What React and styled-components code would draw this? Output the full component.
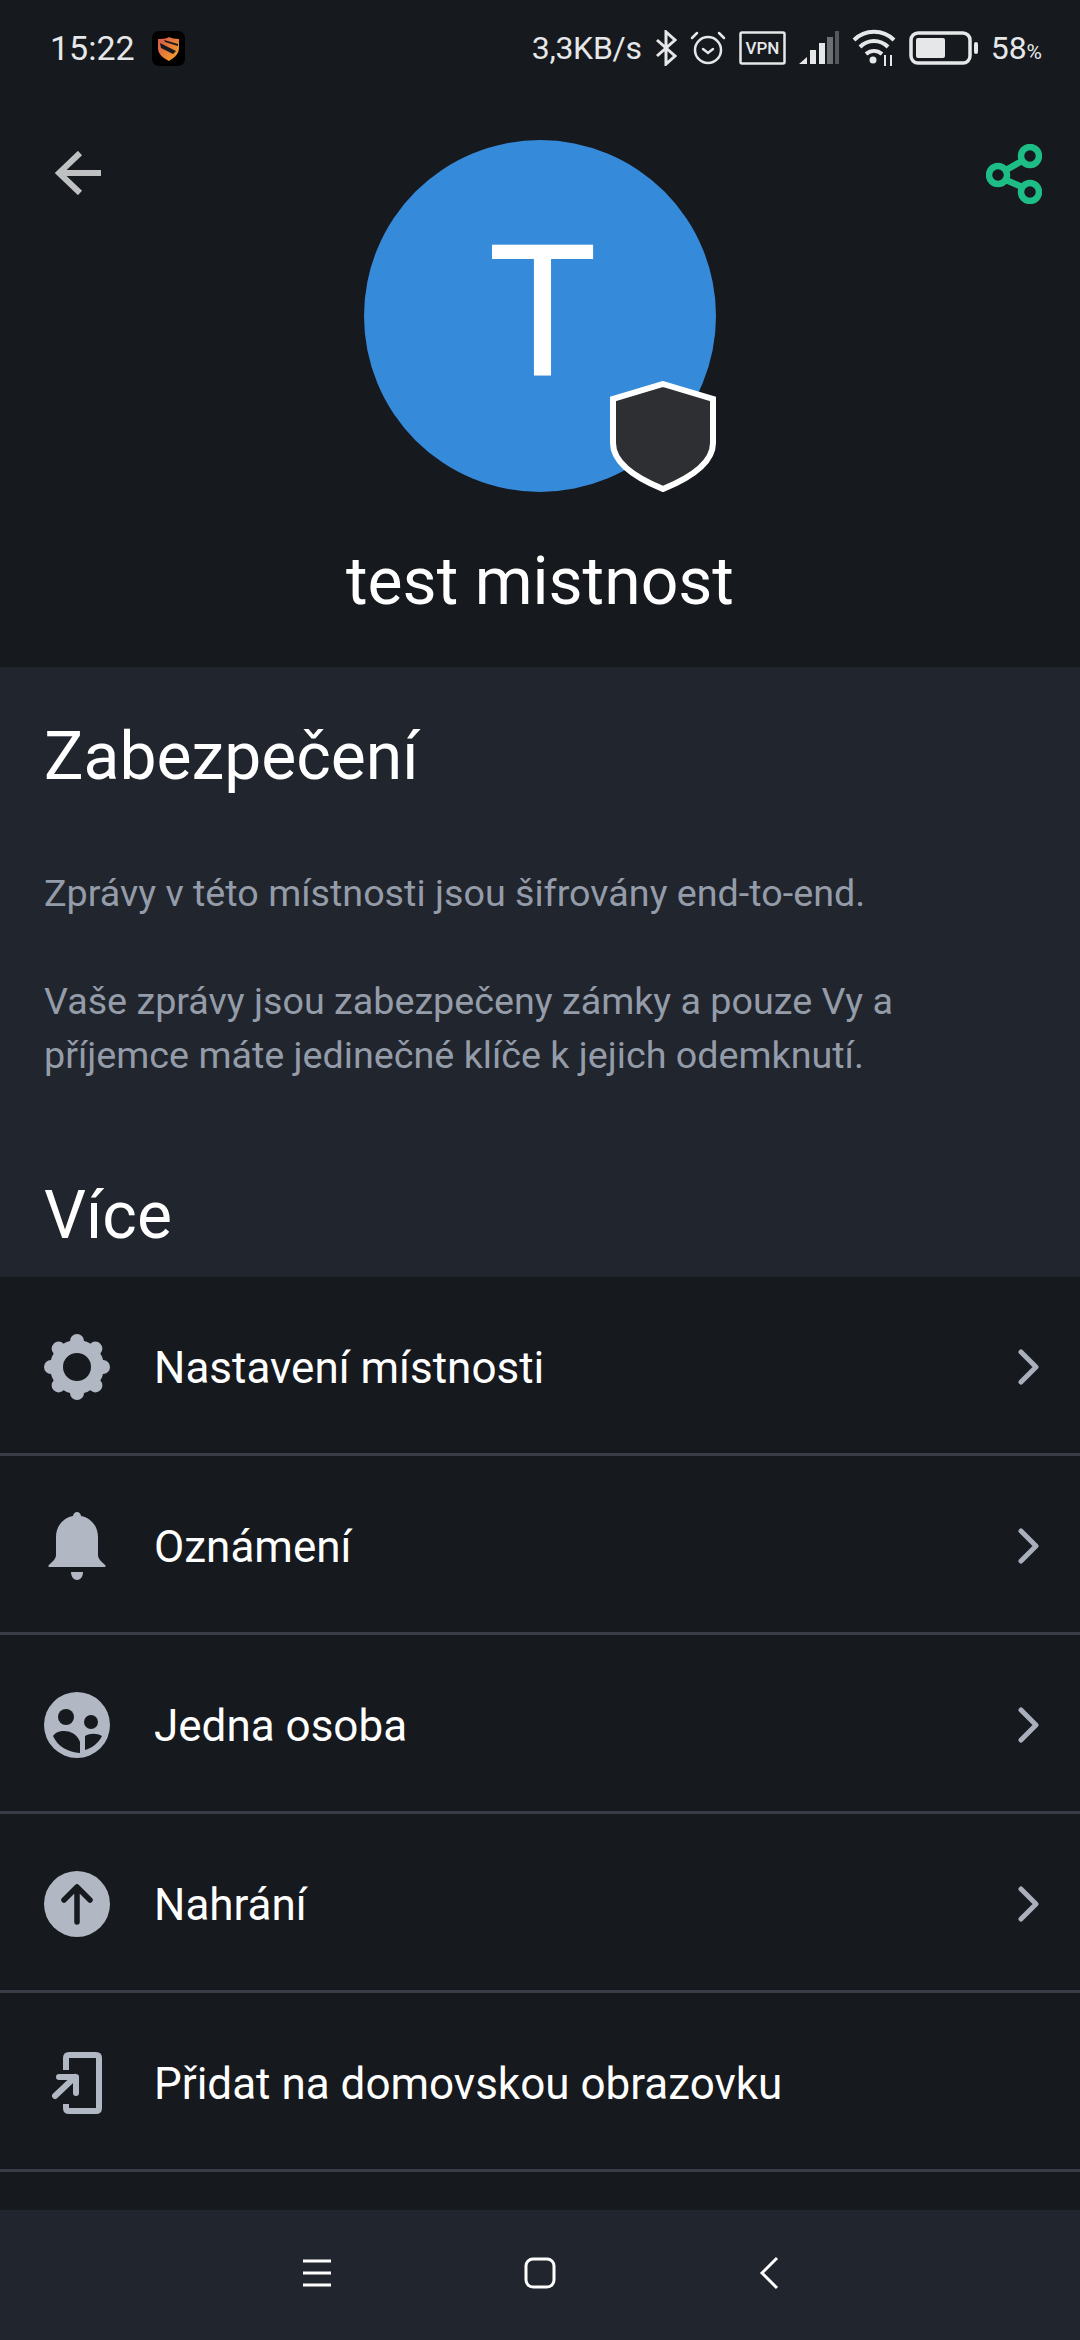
import React from 'react';
import styled, { createGlobalStyle } from 'styled-components';

const GlobalStyle = createGlobalStyle`
  html, body {
    margin: 0;
    padding: 0;
    background: #16191e;
    font-family: Roboto, "Noto Sans", sans-serif;
  }
`;

const Page = styled.div`
  width: 1080px;
  height: 2340px;
  display: flex;
  flex-direction: column;
  overflow: hidden;
  background: #16191e;
`;

const StatusBar = styled.div`
  height: 96px;
  flex: none;
  display: flex;
  align-items: center;
  justify-content: space-between;
  padding: 0 38px 0 50px;
  box-sizing: border-box;
  color: #e6e7e9;
  font-size: 32px;
`;

const StatusGroup = styled.div`
  display: flex;
  align-items: center;
  gap: ${props => props.gap || 0}px;
`;

const Clock = styled.span`
  font-size: 34px;
`;

const Speed = styled.span`
  letter-spacing: -0.3px;
`;

const Percent = styled.span`
  font-size: 21px;
`;

const Hero = styled.div`
  height: 571px;
  flex: none;
  display: grid;
  grid-template-columns: 1fr auto 1fr;
  grid-template-rows: 352px auto;
  padding-top: 44px;
  box-sizing: border-box;
`;

const IconButton = styled.div`
  display: flex;
  justify-content: ${props => props.end ? 'flex-end' : 'flex-start'};
  padding: ${props => props.top}px ${props => props.end ? 38 : 0}px 0 ${props => props.end ? 0 : 55}px;
`;

const Avatar = styled.div`
  position: relative;
  width: 352px;
  height: 352px;
  box-sizing: border-box;
  padding-left: 5px;
  border-radius: 50%;
  background: #368ada;
  color: #fff;
  font-size: 184px;
  line-height: 346px;
  text-align: center;
`;

const Badge = styled.svg`
  position: absolute;
  right: 0;
  bottom: 0;
`;

const RoomName = styled.div`
  grid-column: 1 / -1;
  text-align: center;
  color: #fff;
  font-size: 66px;
  line-height: 72px;
  margin-top: 54px;
`;

const Details = styled.div`
  height: 610px;
  flex: none;
  background: #21252d;
  padding: 0 44px;
  box-sizing: border-box;
`;

const Heading = styled.h2`
  margin: ${props => props.top}px 0 0;
  color: #fff;
  font-size: 66px;
  font-weight: 400;
  line-height: 72px;
`;

const Body = styled.p`
  margin: ${props => props.top}px 0 0;
  color: #949ca9;
  font-size: 37.7px;
  line-height: 54px;
`;

const Menu = styled.div`
  flex: 1;
  min-height: 0;
  background: #16191e;
`;

const Row = styled.div`
  height: 179px;
  box-sizing: border-box;
  border-bottom: 3px solid #393d46;
  display: flex;
  align-items: center;
  padding: 4px 39px 0 44px;
`;

const RowIcon = styled.div`
  width: 66px;
  height: 70px;
  flex: none;
  display: flex;
  align-items: center;
  justify-content: center;
  margin-right: 44px;
`;

const RowLabel = styled.div`
  flex: 1;
  color: #fff;
  font-size: 44px;
  padding-top: 2px;
`;

const NavBar = styled.div`
  height: 130px;
  flex: none;
  background: #21252d;
  display: grid;
  grid-template-columns: repeat(3, 32px);
  justify-content: center;
  column-gap: 191px;
  align-items: center;
  padding-bottom: 4px;
  box-sizing: border-box;
`;

const Bluetooth = () => (
  <svg width="22" height="36" viewBox="0 0 22 36" fill="none" stroke="#e6e7e9" strokeWidth="3">
    <path d="M2 10 L20 26 L11 34 V2 L20 10 L2 26" />
  </svg>
);

const Alarm = () => (
  <svg width="36" height="36" viewBox="0 0 36 36" fill="none" stroke="#e6e7e9" strokeWidth="2.5" strokeLinecap="round">
    <circle cx="18" cy="20" r="13" />
    <path d="M13 19 L18 23 L23 19" />
    <path d="M2 8 L7 3 M34 8 L29 3" />
  </svg>
);

const Vpn = () => (
  <svg width="47" height="34" viewBox="0 0 47 34">
    <rect x="1.5" y="1.5" width="44" height="31" rx="1.5" fill="none" stroke="#e6e7e9" strokeWidth="2.5" />
    <text x="23.5" y="23" textAnchor="middle" fontFamily="Roboto, sans-serif" fontSize="17" fontWeight="500" fill="#e6e7e9">VPN</text>
  </svg>
);

const Signal = () => (
  <svg width="40" height="34" viewBox="0 0 40 34">
    <path d="M0 33 L8 26 V33 Z" fill="#e6e7e9" />
    <rect x="11" y="19" width="6" height="14" fill="#e6e7e9" />
    <rect x="20" y="12" width="6" height="21" fill="#e6e7e9" />
    <rect x="28" y="6" width="6" height="27" fill="#6d7075" />
    <rect x="36" y="0" width="4" height="33" fill="#55585d" />
  </svg>
);

const Wifi = () => (
  <svg width="44" height="38" viewBox="0 0 44 38" fill="none" stroke="#e6e7e9" strokeWidth="4">
    <path d="M2 11 C13 0 31 0 42 11" />
    <path d="M8 18 C16 10 28 10 36 18" />
    <path d="M14 25 C19 21 25 21 30 25" />
    <circle cx="21" cy="31" r="3.5" fill="#e6e7e9" stroke="none" />
    <path d="M33 26 V37 M39 26 V37" strokeWidth="2" />
  </svg>
);

const Battery = () => (
  <svg width="69" height="34" viewBox="0 0 69 34">
    <rect x="2" y="2" width="59" height="30" rx="7" fill="none" stroke="#e6e7e9" strokeWidth="3.5" />
    <rect x="7" y="7" width="29" height="20" rx="2" fill="#e6e7e9" />
    <rect x="65" y="11" width="4" height="12" rx="2" fill="#e6e7e9" />
  </svg>
);

const AppShield = () => (
  <svg width="33" height="35" viewBox="0 0 33 35">
    <defs>
      <linearGradient id="shieldFill" x1="0" y1="0" x2="1" y2="1">
        <stop offset="0" stopColor="#d9534f" />
        <stop offset="1" stopColor="#f7a823" />
      </linearGradient>
    </defs>
    <rect width="33" height="35" rx="7" fill="#000" />
    <path d="M6 8 C12 8 16 7 17 6 C19 7 23 8 27 8 V17 C27 23 22 27 17 30 C11 27 6 23 6 17 Z" fill="url(#shieldFill)" />
    <path d="M8 12 L24 20 L21 23 L9 17 Z M12 9 L26 13 L26 15 L13 11 Z" fill="#16191e" />
  </svg>
);

const BackArrow = () => (
  <svg width="46" height="44" viewBox="0 0 46 44" fill="none" stroke="#bfc0c2" strokeWidth="6">
    <path d="M46 22 H4" />
    <path d="M25 2 L4 22 L25 42" />
  </svg>
);

const ShareIcon = () => (
  <svg width="56" height="60" viewBox="0 0 56 60" fill="none" stroke="#1fbd86" strokeWidth="6.5">
    <circle cx="44" cy="12" r="9" />
    <circle cx="12" cy="31" r="9" />
    <circle cx="44" cy="48" r="9" />
    <path d="M20 26 L36 17 M20 36 L36 43" />
  </svg>
);

const ShieldBadge = () => (
  <Badge width="106" height="111" viewBox="0 0 106 111">
    <path
      d="M53 3 L103 18 V62 C103 82 80 97 53 108 C26 97 3 82 3 62 V18 Z"
      fill="#2e2f33"
      stroke="#fff"
      strokeWidth="6"
    />
  </Badge>
);

const GearIcon = () => (
  <svg width="66" height="66" viewBox="0 0 66 66">
    <circle cx="33" cy="33" r="20.5" fill="none" stroke="#b1b8c3" strokeWidth="13" />
    {[0, 45, 90, 135, 180, 225, 270, 315].map(deg => (
      <rect key={deg} x="26" y="0" width="14" height="16" rx="7" fill="#b1b8c3" transform={`rotate(${deg} 33 33)`} />
    ))}
  </svg>
);

const BellIcon = () => (
  <svg width="58" height="68" viewBox="0 0 58 68" fill="#b1b8c3">
    <path d="M29 0 C31 0 33 2 33 4 C43 6 50 14 50 25 V43 C50 47 54 50 57 53 C58 54 58 55 56 55 H2 C0 55 0 54 1 53 C4 50 8 47 8 43 V25 C8 14 15 6 25 4 C25 2 27 0 29 0 Z" />
    <path d="M23 60 H35 C35 65 32 68 29 68 C26 68 23 65 23 60 Z" />
  </svg>
);

const PeopleIcon = () => (
  <svg width="66" height="66" viewBox="0 0 66 66">
    <circle cx="33" cy="33" r="33" fill="#b1b8c3" />
    <g fill="#16191e">
      <circle cx="22" cy="25" r="8" />
      <circle cx="47" cy="30" r="7" />
      <path d="M9 44 C13 37 31 36 36 50 V61 C24 60 14 55 9 44 Z" />
      <path d="M41 44 C46 41 53 41 58 44 C55 50 49 56 41 58 Z" />
    </g>
  </svg>
);

const UploadIcon = () => (
  <svg width="66" height="66" viewBox="0 0 66 66">
    <circle cx="33" cy="33" r="33" fill="#b1b8c3" />
    <path d="M33 51 V18 M20 29 L33 16 L46 29" fill="none" stroke="#16191e" strokeWidth="5.5" strokeLinecap="round" strokeLinejoin="round" />
  </svg>
);

const AddHomeIcon = () => (
  <svg width="50" height="62" viewBox="0 0 50 62" fill="none" stroke="#b1b8c3" strokeWidth="6">
    <path d="M14 18 V6 C14 4 15 3 17 3 H44 C46 3 47 4 47 6 V56 C47 58 46 59 44 59 H17 C15 59 14 58 14 56 V52" />
    <path d="M3 44 L23 25 M7 25 H24 V41" strokeLinecap="round" strokeLinejoin="round" />
  </svg>
);

const Chevron = () => (
  <svg width="24" height="36" viewBox="0 0 24 36" fill="none" stroke="#a9b0bb" strokeWidth="5" strokeLinecap="round" strokeLinejoin="round">
    <path d="M4 3 L19 18 L4 33" />
  </svg>
);

const rows = [
  { label: 'Nastavení místnosti', icon: <GearIcon />, arrow: true },
  { label: 'Oznámení', icon: <BellIcon />, arrow: true },
  { label: 'Jedna osoba', icon: <PeopleIcon />, arrow: true },
  { label: 'Nahrání', icon: <UploadIcon />, arrow: true },
  { label: 'Přidat na domovskou obrazovku', icon: <AddHomeIcon /> },
];

const App = () => {
  return (
    <Page>
      <GlobalStyle />
      <StatusBar>
        <StatusGroup gap={17}>
          <Clock>15:22</Clock>
          <AppShield />
        </StatusGroup>
        <StatusGroup gap={13}>
          <Speed>3,3KB/s</Speed>
          <Bluetooth />
          <Alarm />
          <Vpn />
          <Signal />
          <Wifi />
          <Battery />
          <span>58<Percent>%</Percent></span>
        </StatusGroup>
      </StatusBar>

      <Hero>
        <IconButton top={11}>
          <BackArrow />
        </IconButton>
        <Avatar>
          T
          <ShieldBadge />
        </Avatar>
        <IconButton end top={4}>
          <ShareIcon />
        </IconButton>
        <RoomName>test mistnost</RoomName>
      </Hero>

      <Details>
        <Heading top={54}>Zabezpečení</Heading>
        <Body top={73}>Zprávy v této místnosti jsou šifrovány end-to-end.</Body>
        <Body top={54}>
          Vaše zprávy jsou zabezpečeny zámky a pouze Vy a
          <br />
          příjemce máte jedinečné klíče k jejich odemknutí.
        </Body>
        <Heading top={98}>Více</Heading>
      </Details>

      <Menu>
        {rows.map(row => (
          <Row key={row.label}>
            <RowIcon>{row.icon}</RowIcon>
            <RowLabel>{row.label}</RowLabel>
            {row.arrow && <Chevron />}
          </Row>
        ))}
      </Menu>

      <NavBar>
        <svg width="32" height="30" viewBox="0 0 32 30" stroke="#fff" strokeWidth="3">
          <path d="M2 3 H30 M2 15 H30 M2 27 H30" />
        </svg>
        <svg width="32" height="32" viewBox="0 0 32 32" fill="none" stroke="#fff" strokeWidth="3">
          <rect x="2" y="2" width="28" height="28" rx="7" />
        </svg>
        <svg width="32" height="34" viewBox="0 0 32 34" fill="none" stroke="#fff" strokeWidth="3">
          <path d="M30 2 L15 17 L30 32" />
        </svg>
      </NavBar>
    </Page>
  );
};

export default App;
